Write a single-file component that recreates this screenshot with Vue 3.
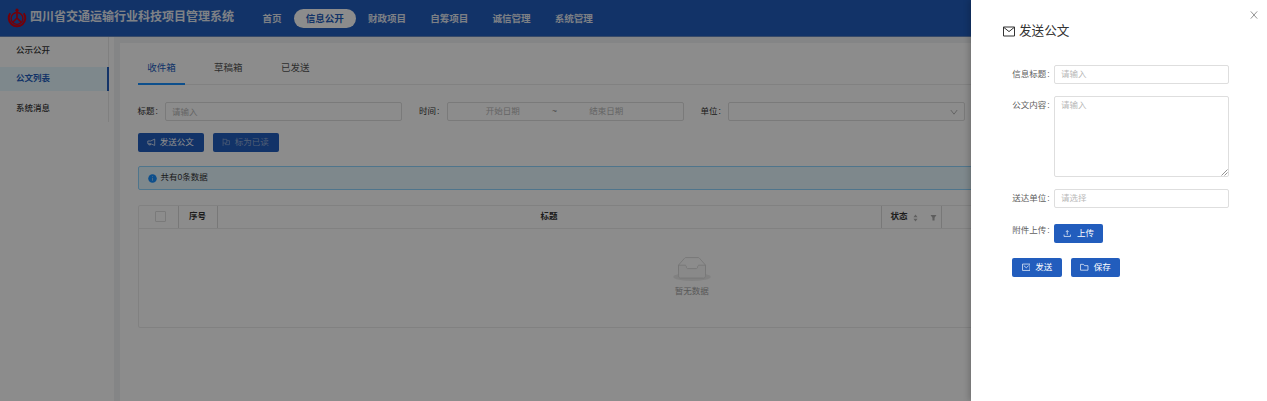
<script setup>
const nav = ['首页', '信息公开', '财政项目', '自筹项目', '诚信管理', '系统管理']
const side = ['公示公开', '公文列表', '系统消息']
const tabs = ['收件箱', '草稿箱', '已发送']
</script>

<template>
  <div class="page">
    <header class="header">
      <svg class="logo" viewBox="0 0 20 20" fill="none" stroke="#d4000f">
        <path d="M3.2 5.2A8.3 8.3 0 1 0 16.8 5.2" stroke-width="2" />
        <circle cx="10" cy="10.4" r="5.9" stroke-width="1.3" />
        <circle cx="10" cy="2.2" r="1.6" fill="#d4000f" stroke="none" />
        <path d="M10 3V10.5M10 10L5.8 14.2M10 10L14.2 14.2" stroke-width="1.6" />
      </svg>
      <h1 class="brand">四川省交通运输行业科技项目管理系统</h1>
      <nav class="nav">
        <a v-for="(n, i) in nav" :key="n" class="nav-item" :class="{ active: i === 1 }">{{ n }}</a>
      </nav>
    </header>

    <div class="body">
      <aside class="sider">
        <ul class="menu">
          <li v-for="(s, i) in side" :key="s" :class="{ active: i === 1 }">{{ s }}</li>
        </ul>
      </aside>

      <main class="content">
        <div class="tabs">
          <div v-for="(t, i) in tabs" :key="t" class="tab" :class="{ active: i === 0 }">{{ t }}</div>
        </div>

        <div class="filters">
          <label>标题<b>:</b></label>
          <div class="field">请输入</div>
          <label>时间<b>:</b></label>
          <div class="field range"><span>开始日期</span><i>~</i><span>结束日期</span></div>
          <label>单位<b>:</b></label>
          <div class="field select">
            <svg width="8" height="8" viewBox="0 0 8 8" fill="none" stroke="#b8b8b8"><path d="M.8 2L4 6.2L7.2 2" /></svg>
          </div>
        </div>

        <div class="actions">
          <button class="btn wide">
            <svg viewBox="0 0 16 16"><path d="M14.5 2V14L7 10.8H1.5V5.6H7ZM3.5 11V13H6.5V11" /></svg>发送公文
          </button>
          <button class="btn wide dim">
            <svg viewBox="0 0 16 16"><path d="M2 1V15M2 2.5H9V9.5H2M9 5H14V12.5H6.5V9.5" /></svg>标为已读
          </button>
        </div>

        <div class="alert">
          <svg width="9" height="9" viewBox="0 0 16 16"><circle cx="8" cy="8" r="7.6" fill="#1890ff" /><path d="M8 3.8V5.2M8 6.8V12" stroke="#b9dcff" stroke-width="1.2" /></svg>
          <span>共有0条数据</span>
        </div>

        <div class="table">
          <div class="thead">
            <div><span class="check"></span></div>
            <div>序号</div>
            <div>标题</div>
            <div class="status">
              状态
              <svg class="sort" viewBox="0 0 6 10"><path d="M3 .6L5.6 4H.4ZM3 9.4L5.6 6H.4Z" fill="#b0b0b0" /></svg>
              <svg class="filter" viewBox="0 0 8 8"><path d="M.6 1H7.4L5.2 4.4V7.3H2.8V4.4Z" fill="#aaa" /></svg>
            </div>
            <div></div>
          </div>
          <div class="empty">
            <svg width="38" height="24" viewBox="0 0 64 41">
              <g transform="translate(0 1)" fill="none" fill-rule="evenodd">
                <ellipse fill="#ececec" cx="32" cy="33" rx="32" ry="7" />
                <g stroke="#d4d4d4" stroke-width="1.4">
                  <path d="M55 12.76L44.854 1.258C44.367.474 43.656 0 42.907 0H21.093c-.749 0-1.46.474-1.947 1.257L9 12.761V22h46v-9.24z" />
                  <path d="M41.613 15.931c0-1.605.994-2.93 2.227-2.931H55v18.137C55 33.26 53.68 35 52.05 35h-40.1C10.32 35 9 33.259 9 31.137V13h11.16c1.233 0 2.227 1.323 2.227 2.928v.022c0 1.605 1.005 2.901 2.237 2.901h14.752c1.232 0 2.237-1.308 2.237-2.913v-.007z" fill="#fafafa" />
                </g>
              </g>
            </svg>
            <p>暂无数据</p>
          </div>
        </div>
      </main>
    </div>

    <div class="mask"></div>

    <section class="drawer">
      <svg class="close" viewBox="0 0 8 8"><path d="M.8.4L7.2 7.6M7.2.4L.8 7.6" stroke="#888" stroke-width=".9" /></svg>
      <h2>
        <svg width="12" height="11" viewBox="0 0 12 11" fill="none" stroke="#333"><path d="M.5 1H11.5V10H.5ZM.8 1.4L6 5.6L11.2 1.4" /></svg><span>发送公文</span>
      </h2>
      <div class="form">
        <div class="row"><label>信息标题<b>:</b></label><div class="field">请输入</div></div>
        <div class="row">
          <label>公文内容<b>:</b></label>
          <div class="field area">请输入
            <svg class="grip" viewBox="0 0 7 7"><path d="M.5 6.5L6.5 .5M3.5 6.5L6.5 3.5" stroke="#777" stroke-width=".8" /></svg>
          </div>
        </div>
        <div class="row"><label>送达单位<b>:</b></label><div class="field">请选择</div></div>
        <div class="row upload">
          <label>附件上传<b>:</b></label>
          <button class="btn"><svg viewBox="0 0 16 16"><path d="M8 11V3M5.5 5.5L8 3L10.5 5.5M2 10.5V14H14V10.5" /></svg>上传</button>
        </div>
        <div class="submit">
          <button class="btn"><svg viewBox="0 0 16 16"><path d="M1 2H15V14H1ZM3.5 5L8 9L12.5 5" /></svg>发送</button>
          <button class="btn"><svg viewBox="0 0 16 16"><path d="M1 2.5H6.5L8.5 5H15V13.5H1Z" /></svg>保存</button>
        </div>
      </div>
    </section>
  </div>
</template>

<style>
body { overflow: hidden; }
</style>

<style scoped>
* { box-sizing: border-box; }
.page {
  position: relative; width: 1267px; height: 401px; overflow: hidden; background: #f0f2f5;
  font-family: "Liberation Sans", "Noto Sans CJK SC", sans-serif; font-size: 8.5px; line-height: 14px; color: #333;
}
.header { height: 37px; background: #225dbd; border-bottom: 1px solid #6487bf; display: flex; align-items: center; color: #fff; }
.logo { width: 20px; height: 20px; margin: 0 3.5px 0 6.5px; flex: none; }
.brand { margin: 0; width: 205px; font-size: 12px; line-height: 34px; height: 36px; font-weight: 700; white-space: nowrap; color: #e8edf5; }
.nav { display: flex; margin-left: 15.5px; padding-top: 1px; }
.nav-item { padding: 0 12px; height: 19px; line-height: 19px; border-radius: 10px; font-size: 9.57px; font-weight: 700; white-space: nowrap; color: #e4eaf3; }
.nav-item.active { background: #fff; color: #225dbd; }
.body { display: flex; height: 364px; }
.sider { width: 114px; background: #fff; flex: none; }
.menu { list-style: none; margin: 0; padding: 1px 0 2px; width: 109px; border-right: 1px solid #eaeaea; display: flex; flex-direction: column; gap: 5px; }
.menu li { height: 24px; line-height: 24px; padding-left: 16px; font-weight: 500; }
.menu li.active { background: #e6f7ff; color: #225dbd; border-right: 2px solid #225dbd; margin-right: -1px; font-weight: 700; line-height: 23px; }
.content { margin: 6px 4px 0 6px; flex: 1; background: #fff; padding: 8px 17px 0 17.5px; }
.tabs { display: flex; height: 33.5px; border-bottom: 1px solid #ececec; gap: 19px; }
.tab { font-size: 9.5px; padding: 0 9.7px; line-height: 34px; height: 34px; color: #555; }
.tab.active { color: #225dbd; border-bottom: 2px solid #1890ff; }
.filters { display: flex; align-items: center; margin-top: 17.5px; }
.filters label { width: 27.5px; flex: none; white-space: nowrap; line-height: 13px; padding-bottom: 1px; }
label b { font-weight: 400; margin-left: 1px; }
.field { height: 19px; border: 1px solid #dedede; border-radius: 2px; padding: 0 6px; line-height: 18px; color: #b8b8b8; background: #fff; white-space: nowrap; }
.filters .field { width: 237px; margin-right: 17px; flex: none; }
.range { display: flex; }
.range span { width: 98.5px; text-align: center; line-height: 17px; }
.range i { width: 5px; font-style: normal; color: #888; line-height: 17px; }
.select { display: flex; justify-content: flex-end; align-items: center; }
.actions { display: flex; gap: 9px; margin-top: 12px; }
.btn { width: 49.5px; height: 19px; padding: 0; border: 0; border-radius: 2px; background: #225dbd; color: #fff; font: inherit; display: flex; align-items: center; justify-content: center; gap: 5px; white-space: nowrap; }
.btn svg { width: 8.5px; height: 8.5px; fill: none; stroke: currentColor; stroke-width: 1.3; }
.btn.wide { width: 66px; gap: 4px; line-height: 13px; padding-bottom: 1px; }
.btn.dim { color: #93acd6; }
.alert { margin-top: 14px; height: 24px; border: 1px solid #91d5ff; border-radius: 2px; background: #e6f7ff; padding-left: 9px; display: flex; align-items: center; gap: 4px; line-height: 22px; }
.alert span { margin-top: -2px; }
.table { margin-top: 15px; height: 123px; border: 1px solid #ececec; border-radius: 2px; }
.thead { display: grid; grid-template-columns: 40px 39px 664px 60px 1fr; height: 22.5px; border-bottom: 1px solid #ececec; font-weight: 700; }
.thead > div { border-right: 1px solid #dadada; display: flex; align-items: center; justify-content: center; line-height: 20px; padding-bottom: 1px; }
.thead > div:last-child { border: 0; }
.check { width: 11px; height: 11px; border: 1px solid #dedede; border-radius: 1px; margin-left: 5px; }
.thead .status { justify-content: flex-start; padding-left: 9px; }
.sort { width: 5px; height: 8px; margin: 3px 12px 0 5px; }
.filter { width: 7px; height: 7px; margin-top: 3px; }
.empty { display: flex; flex-direction: column; align-items: center; padding-top: 28px; color: #a3a3a3; }
.empty p { margin: 3px 0 0; }
.mask { position: absolute; inset: 0; background: rgba(0, 0, 0, .45); }
.drawer { position: absolute; top: 0; right: 0; width: 296px; height: 401px; background: #fff; box-shadow: -2px 0 6px rgba(0, 0, 0, .2); padding: 21px 38px 0 32px; color: #606060; }
.close { position: absolute; top: 11px; right: 9.5px; width: 8px; height: 8px; }
h2 { margin: 0; font-size: 12.6px; font-weight: 400; line-height: 19px; color: #333; display: flex; align-items: center; gap: 4px; }
h2 span { margin-top: 1px; }
.form { padding: 23.5px 0 0 9.3px; }
.row { display: flex; margin-bottom: 12px; }
.row label { width: 41.7px; flex: none; line-height: 18px; white-space: nowrap; }
.row .field { flex: 1; line-height: 17.5px; }
.row .area { position: relative; height: 81px; line-height: 16.5px; }
.grip { position: absolute; right: 0; bottom: 0; width: 7px; height: 7px; }
.upload label { margin-top: 1px; }
.upload .btn { margin-top: 4px; }
.submit { display: flex; gap: 9px; padding-top: 3px; }
</style>
